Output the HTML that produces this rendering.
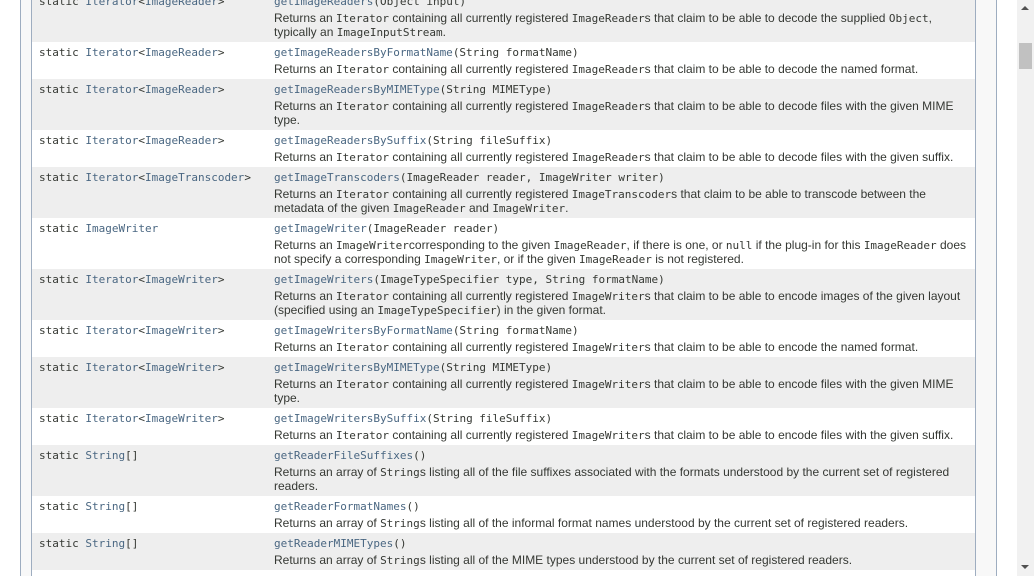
<!DOCTYPE html>
<html><head><style>
html,body{margin:0;width:1034px;height:576px;overflow:hidden;}
body{background:#fff;position:relative;font-family:"Liberation Sans",Arial,sans-serif;}
.l1{position:absolute;left:20px;top:0;width:1px;height:576px;background:#9eadc0}
.band{position:absolute;left:21px;top:0;width:10px;height:576px;background:#f8f8f8}
.l2{position:absolute;left:31px;top:0;width:1px;height:576px;background:#9eadc0}
.r1{position:absolute;left:975px;top:0;width:1px;height:576px;background:#9eadc0}
.rband{position:absolute;left:976px;top:0;width:20px;height:576px;background:#f8f8f8}
.r2{position:absolute;left:996px;top:0;width:1px;height:576px;background:#9eadc0}
.sb{position:absolute;left:1017px;top:0;width:17px;height:576px;background:#f1f1f1}
.thumb{position:absolute;left:1019px;top:43px;width:13px;height:26px;background:#c1c1c1}
.up{position:absolute;left:1021px;top:6px;width:0;height:0;border-left:4px solid transparent;border-right:4px solid transparent;border-bottom:4px solid #505050}
.dn{position:absolute;left:1021px;top:565px;width:0;height:0;border-left:4px solid transparent;border-right:4px solid transparent;border-top:4px solid #505050}
.tbl{position:absolute;left:32px;top:0;width:943px;height:576px;overflow:hidden}
.row{position:absolute;left:0;width:943px;box-sizing:border-box}
.g{background:#eeeeee}
.c1{position:absolute;left:7px;top:4px;font:11px/14px "DejaVu Sans Mono",monospace;color:#353833;white-space:nowrap}
.c2{position:absolute;left:242px;top:4px;width:700px;font:12px/14px "Liberation Sans",Arial,sans-serif;color:#353833}
.m{font:11px/14px "DejaVu Sans Mono",monospace;color:#353833;display:block;height:16px;white-space:nowrap}
.m i{font-style:normal;color:#4a6782}
code{font:11px "DejaVu Sans Mono",monospace;color:#353833}
a{color:#4a6782;text-decoration:none}
</style></head><body>
<div class="l1"></div><div class="band"></div><div class="l2"></div>
<div class="rband"></div><div class="r1"></div><div class="r2"></div>
<div class="sb"></div><div class="thumb"></div><div class="up"></div><div class="dn"></div>
<div class="tbl">
<div class="row g" style="top:-9px;height:51px"><div class="c1">static <a>Iterator</a>&lt;<a>ImageReader</a>&gt;</div><div class="c2"><span class="m"><i>getImageReaders</i>(Object input)</span>Returns an <code>Iterator</code> containing all currently registered <code>ImageReader</code>s that claim to be able to decode the supplied <code>Object</code>, typically an <code>ImageInputStream</code>.</div></div>
<div class="row" style="top:42px;height:37px"><div class="c1">static <a>Iterator</a>&lt;<a>ImageReader</a>&gt;</div><div class="c2"><span class="m"><i>getImageReadersByFormatName</i>(String formatName)</span>Returns an <code>Iterator</code> containing all currently registered <code>ImageReader</code>s that claim to be able to decode the named format.</div></div>
<div class="row g" style="top:79px;height:51px"><div class="c1">static <a>Iterator</a>&lt;<a>ImageReader</a>&gt;</div><div class="c2"><span class="m"><i>getImageReadersByMIMEType</i>(String MIMEType)</span>Returns an <code>Iterator</code> containing all currently registered <code>ImageReader</code>s that claim to be able to decode files with the given MIME type.</div></div>
<div class="row" style="top:130px;height:37px"><div class="c1">static <a>Iterator</a>&lt;<a>ImageReader</a>&gt;</div><div class="c2"><span class="m"><i>getImageReadersBySuffix</i>(String fileSuffix)</span>Returns an <code>Iterator</code> containing all currently registered <code>ImageReader</code>s that claim to be able to decode files with the given suffix.</div></div>
<div class="row g" style="top:167px;height:51px"><div class="c1">static <a>Iterator</a>&lt;<a>ImageTranscoder</a>&gt;</div><div class="c2"><span class="m"><i>getImageTranscoders</i>(ImageReader reader, ImageWriter writer)</span>Returns an <code>Iterator</code> containing all currently registered <code>ImageTranscoder</code>s that claim to be able to transcode between the metadata of the given <code>ImageReader</code> and <code>ImageWriter</code>.</div></div>
<div class="row" style="top:218px;height:51px"><div class="c1">static <a>ImageWriter</a></div><div class="c2"><span class="m"><i>getImageWriter</i>(ImageReader reader)</span>Returns an <code>ImageWriter</code>corresponding to the given <code>ImageReader</code>, if there is one, or <code>null</code> if the plug-in for this <code>ImageReader</code> does not specify a corresponding <code>ImageWriter</code>, or if the given <code>ImageReader</code> is not registered.</div></div>
<div class="row g" style="top:269px;height:51px"><div class="c1">static <a>Iterator</a>&lt;<a>ImageWriter</a>&gt;</div><div class="c2"><span class="m"><i>getImageWriters</i>(ImageTypeSpecifier type, String formatName)</span>Returns an <code>Iterator</code> containing all currently registered <code>ImageWriter</code>s that claim to be able to encode images of the given layout (specified using an <code>ImageTypeSpecifier</code>) in the given format.</div></div>
<div class="row" style="top:320px;height:37px"><div class="c1">static <a>Iterator</a>&lt;<a>ImageWriter</a>&gt;</div><div class="c2"><span class="m"><i>getImageWritersByFormatName</i>(String formatName)</span>Returns an <code>Iterator</code> containing all currently registered <code>ImageWriter</code>s that claim to be able to encode the named format.</div></div>
<div class="row g" style="top:357px;height:51px"><div class="c1">static <a>Iterator</a>&lt;<a>ImageWriter</a>&gt;</div><div class="c2"><span class="m"><i>getImageWritersByMIMEType</i>(String MIMEType)</span>Returns an <code>Iterator</code> containing all currently registered <code>ImageWriter</code>s that claim to be able to encode files with the given MIME type.</div></div>
<div class="row" style="top:408px;height:37px"><div class="c1">static <a>Iterator</a>&lt;<a>ImageWriter</a>&gt;</div><div class="c2"><span class="m"><i>getImageWritersBySuffix</i>(String fileSuffix)</span>Returns an <code>Iterator</code> containing all currently registered <code>ImageWriter</code>s that claim to be able to encode files with the given suffix.</div></div>
<div class="row g" style="top:445px;height:51px"><div class="c1">static <a>String</a>[]</div><div class="c2"><span class="m"><i>getReaderFileSuffixes</i>()</span>Returns an array of <code>String</code>s listing all of the file suffixes associated with the formats understood by the current set of registered readers.</div></div>
<div class="row" style="top:496px;height:37px"><div class="c1">static <a>String</a>[]</div><div class="c2"><span class="m"><i>getReaderFormatNames</i>()</span>Returns an array of <code>String</code>s listing all of the informal format names understood by the current set of registered readers.</div></div>
<div class="row g" style="top:533px;height:37px"><div class="c1">static <a>String</a>[]</div><div class="c2"><span class="m"><i>getReaderMIMETypes</i>()</span>Returns an array of <code>String</code>s listing all of the MIME types understood by the current set of registered readers.</div></div>
<div class="row" style="top:570px;height:37px"><div class="c1">static <a>String</a>[]</div><div class="c2"><span class="m"><i>getWriterFileSuffixes</i>()</span></div></div>
</div>
</body></html>
